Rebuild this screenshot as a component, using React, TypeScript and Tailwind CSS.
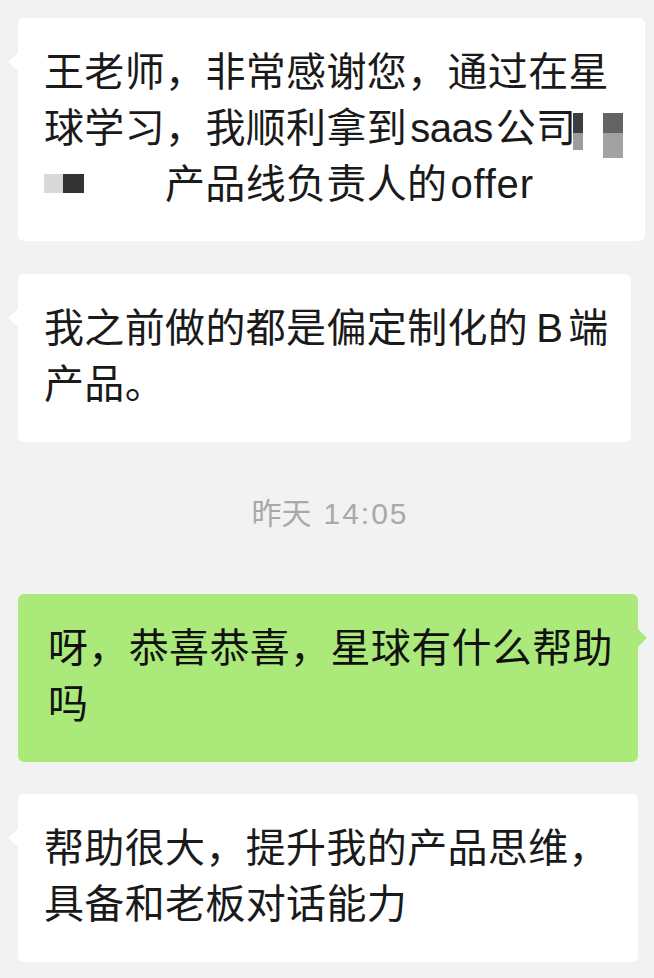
import React from "react";

const font = {
  fontFamily: '"Liberation Sans", "Noto Sans CJK SC", sans-serif',
};

function LeftTail() {
  return (
    <span className="absolute left-[-10px] top-[35px] h-0 w-0 border-y-[9px] border-r-[10px] border-y-transparent border-r-white" />
  );
}

function RightTail() {
  return (
    <span className="absolute right-[-9px] top-[35px] h-0 w-0 border-y-[9px] border-l-[9px] border-y-transparent border-l-[#abe97b]" />
  );
}

export default function App() {
  return (
    <div
      className="min-h-[978px] w-[654px] bg-[#f2f2f2] pt-[18px] text-[#1a1a1a]"
      style={font}
    >
      <div className="flex flex-col gap-[33px] pl-[18px]">
        {/* Bubble 1 */}
        <div className="relative w-[627px] rounded-[6px] bg-white pb-[29px] pl-[26px] pt-[26px] text-[40px] leading-[56px] tracking-[0.35px]">
          <LeftTail />
          <div className="whitespace-nowrap">王老师，非常感谢您，通过在星</div>
          <div className="whitespace-nowrap">
            球学习，我顺利拿到<span className="ml-[3px] mr-[3px] tracking-[-0.5px]">saas</span>公司
          </div>
          <div className="whitespace-nowrap pl-[121px]">
            产品线负责人的<span className="ml-[3px] tracking-[0.8px]">offer</span>
          </div>
          {/* redaction marks */}
          <span className="absolute left-[555px] top-[95px] flex h-[37px] w-[10px] flex-col">
            <span className="h-[20px] bg-[#3d3d3d]" />
            <span className="h-[17px] bg-[#9c9c9c]" />
          </span>
          <span className="absolute left-[585px] top-[95px] flex h-[45px] w-[20px] flex-col">
            <span className="h-[20px] bg-[#646464]" />
            <span className="h-[25px] bg-[#a2a2a2]" />
          </span>
          <span className="absolute left-[26px] top-[156px] flex h-[19px] w-[40px]">
            <span className="w-[19px] bg-[#d9d9d9]" />
            <span className="w-[21px] bg-[#333333]" />
          </span>
        </div>

        {/* Bubble 2 */}
        <div className="relative w-[613px] rounded-[6px] bg-white pb-[30px] pl-[26px] pt-[26px] text-[40px] leading-[56px] tracking-[0.35px]">
          <LeftTail />
          <div className="whitespace-nowrap">
            我之前做的都是偏定制化的<span className="ml-[8px] mr-[5px]">B</span>端
          </div>
          <div className="whitespace-nowrap">产品。</div>
        </div>
      </div>

      <div className="mt-[52px] flex h-[40px] items-center justify-center pl-[6px] text-[30px] leading-[40px] text-[#a9a9a9]">
        <span>昨天</span>
        <span className="ml-[12px] tracking-[2px]">14:05</span>
      </div>

      <div className="mt-[60px] flex flex-col gap-[32px] pl-[18px]">
        {/* Bubble 3 */}
        <div className="relative w-[620px] rounded-[6px] bg-[#abe97b] pb-[30px] pl-[30px] pt-[26px] text-[40px] leading-[56px] tracking-[0.35px] text-[#111]">
          <RightTail />
          <div className="whitespace-nowrap">呀，恭喜恭喜，星球有什么帮助</div>
          <div className="whitespace-nowrap">吗</div>
        </div>

        {/* Bubble 4 */}
        <div className="relative w-[620px] rounded-[6px] bg-white pb-[30px] pl-[26px] pt-[26px] text-[40px] leading-[56px] tracking-[0.35px]">
          <LeftTail />
          <div className="whitespace-nowrap">帮助很大，提升我的产品思维，</div>
          <div className="whitespace-nowrap">具备和老板对话能力</div>
        </div>
      </div>
    </div>
  );
}
